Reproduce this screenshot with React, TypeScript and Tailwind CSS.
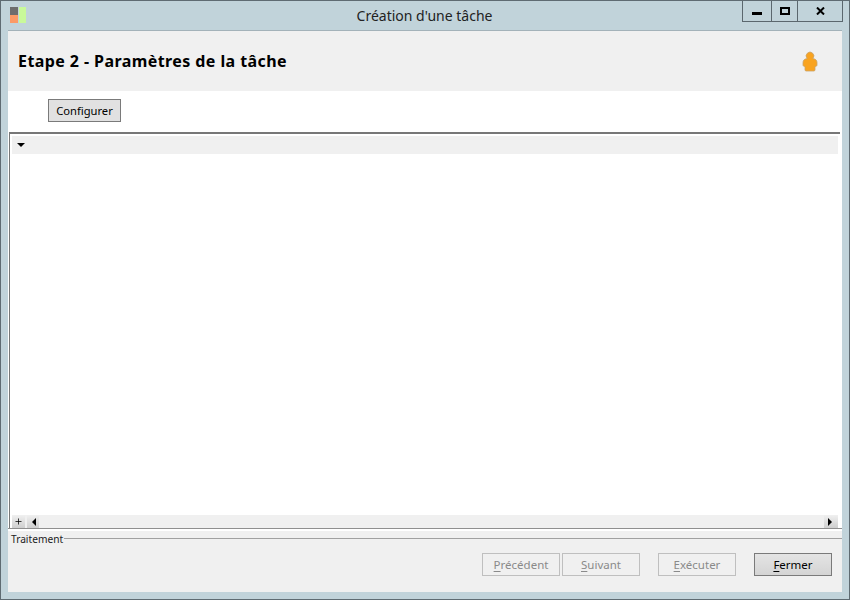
import { Plus } from "lucide-react";

const sans = "font-['Noto_Sans','Open_Sans',sans-serif]";

function UserIcon() {
  return (
    <svg width="16" height="21" viewBox="0 0 16 21">
      <path
        d="M5.200 7.500A3.800 3.800 0 1 1 10.800 7.500C13.500 8 15 9.200 15 11.500v2.500c0 1-1 1.500-2 1.500v3.500c0 .5-.5 1-1 1H4c-.5 0-1-.5-1-1v-3.500c-1 0-2-.5-2-1.500v-2.500C1 9.200 2.500 8 5.200 7.500z"
        fill="#f9a31f"
        stroke="#c9a36a"
        strokeWidth="0.800"
      />
    </svg>
  );
}

function AppIcon() {
  return (
    <div className="flex gap-px">
      <div className="flex flex-col w-[8px]">
        <div className="h-2 bg-[#6d6d6d]" />
        <div className="h-2 bg-[#fb9a66]" />
      </div>
      <div className="w-[7px] h-4 bg-[#c9f99a]" />
    </div>
  );
}

function WindowButton({ width, children }: { width: string; children: React.ReactNode }) {
  return (
    <div className={`${width} h-full flex items-center justify-center border-r border-[#5b676e]`}>
      {children}
    </div>
  );
}

function FooterButton({ first, rest, disabled, className = "" }: { first: string; rest: string; disabled?: boolean; className?: string }) {
  return (
    <button
      className={`w-[78px] h-[23px] border text-[11.500px] ${sans} ${
        disabled
          ? "border-[#bfbfbf] text-[#8a8a8a] bg-[#f0f0f0]"
          : "border-[#7a7a7a] text-black bg-gradient-to-b from-[#e4e4e4] to-[#d4d4d4]"
      } ${className}`}
    >
      <span className="underline underline-offset-2">{first}</span>
      {rest}
    </button>
  );
}

export default function App() {
  return (
    <div className="w-[850px] h-[600px] flex flex-col bg-[#c1d3da] border border-[#5f6b72] overflow-hidden">
      {/* Title bar */}
      <div className="h-[29px] shrink-0 flex relative">
        <div className="pl-[9px] pt-[6px]">
          <AppIcon />
        </div>
        <div className={`flex-1 text-center pt-[5px] pr-[26px] text-sm text-[#222] ${sans}`}>
          Création d'une tâche
        </div>
        <div className="absolute top-0 right-[6px] h-[21px] flex border-b border-l border-[#5b676e]">
          <WindowButton width="w-[29px]">
            <div className="w-[10px] h-[3px] bg-black mt-[5px]" />
          </WindowButton>
          <WindowButton width="w-[26px]">
            <div className="w-[10px] h-[8px] border-2 border-black" />
          </WindowButton>
          <WindowButton width="w-[45px]">
            <svg width="9" height="8" viewBox="0 0 9 8">
              <path d="M1 0.500L8 7.500M8 0.500L1 7.500" stroke="#000" strokeWidth="2" />
            </svg>
          </WindowButton>
        </div>
      </div>

      {/* Client area */}
      <div className="flex-1 mx-[7px] mb-[7px] flex flex-col bg-white border-t border-[#a3b2b9] min-h-0">
        <div className="h-[60px] shrink-0 bg-[#f0f0f0] flex items-center justify-between pl-[10px] pr-[24px]">
          <h1 className={`text-base font-bold text-black tracking-[0.42px] ${sans}`}>
            Etape 2 - Paramètres de la tâche
          </h1>
          <UserIcon />
        </div>

        <div className="h-[41px] shrink-0 pl-[40px] pt-[8px]">
          <button className={`block w-[73px] h-[23px] pt-px border border-[#7a7a7a] bg-[#e1e1e1] text-[11.200px] text-black ${sans}`}>
            Configurer
          </button>
        </div>

        {/* Tree panel */}
        <div className="flex-1 ml-px mr-[2px] flex flex-col border-t-2 border-l border-[#777] min-h-0 pt-[2px] pl-[2px] pr-[2px]">
          <div className="h-[18px] shrink-0 bg-[#f0f0f0] flex items-center pl-[5px]">
            <div className="w-0 h-0 border-x-[4px] border-x-transparent border-t-[4px] border-t-black" />
          </div>
          <div className="flex-1" />
          <div className="h-[13px] shrink-0 bg-[#f0f0f0] flex items-center">
            <div className="w-[13px] h-[13px] flex items-center justify-center bg-gradient-to-b from-[#f0f0f0] to-[#cfcfcf]">
              <Plus size={9} strokeWidth={2} color="#000" />
            </div>
            <div className="w-[12px] h-[13px] flex items-center justify-center pl-[2px] bg-gradient-to-b from-[#f0f0f0] to-[#cfcfcf] ml-[2px]">
              <div className="w-0 h-0 border-y-[4px] border-y-transparent border-r-[4px] border-r-black" />
            </div>
            <div className="flex-1" />
            <div className="w-[14px] h-[13px] flex items-center pl-[4px] bg-gradient-to-b from-[#f0f0f0] to-[#cfcfcf]">
              <div className="w-0 h-0 border-y-[4px] border-y-transparent border-l-[4px] border-l-black" />
            </div>
          </div>
        </div>

        {/* Footer */}
        <div className="h-[64px] shrink-0 bg-[#f0f0f0] border-t border-[#8f8f8f] relative flex flex-col">
          <div className="h-[2px] bg-white" />
          <div className="flex items-center h-[16px] -mt-px">
            <span className={`pl-[3px] pr-px pt-[2px] text-[10.200px] leading-none text-[#222] ${sans}`}>Traitement</span>
            <div className="flex-1 h-px bg-[#a0a0a0]" />
          </div>
          <div className="flex justify-end pr-[10px] pt-[7px]">
            <FooterButton first="P" rest="récédent" disabled />
            <FooterButton first="S" rest="uivant" disabled className="ml-[2px]" />
            <FooterButton first="E" rest="xécuter" disabled className="ml-[18px]" />
            <FooterButton first="F" rest="ermer" className="ml-[18px]" />
          </div>
        </div>
      </div>
    </div>
  );
}
